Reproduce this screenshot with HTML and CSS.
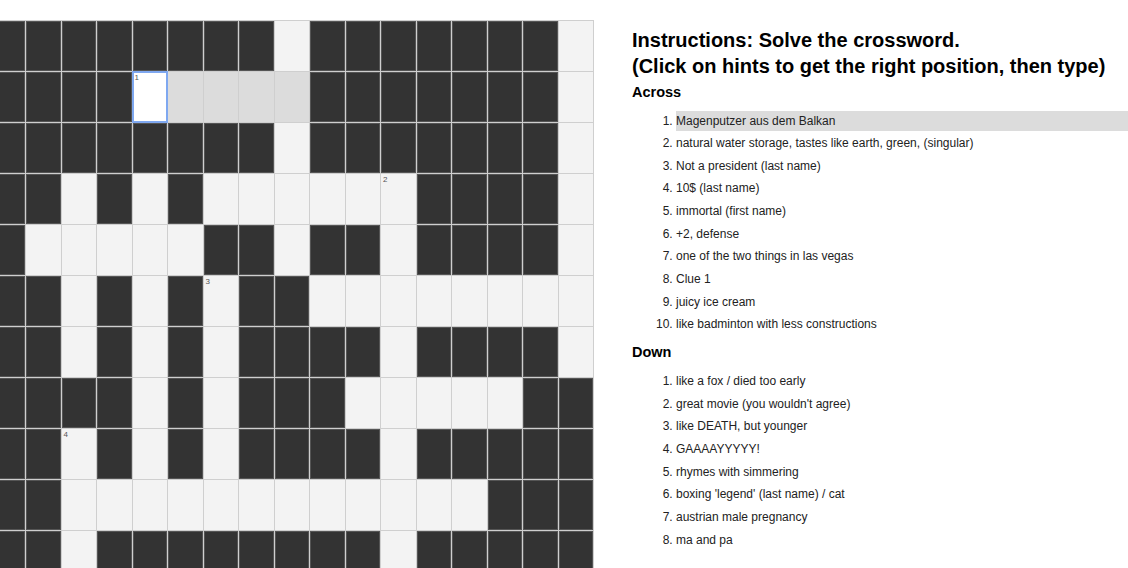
FILE: index.html
```html
<!DOCTYPE html>
<html lang="en">
<head>
<meta charset="utf-8">
<title>Crossword</title>
<link rel="stylesheet" href="styles.css">
</head>
<body>
<div class="page">
  <div class="board">
    <div class="grid">
      <!-- row 0 -->
      <div class="c b"></div><div class="c b"></div><div class="c b"></div><div class="c b"></div><div class="c b"></div><div class="c b"></div><div class="c b"></div><div class="c b"></div><div class="c"></div><div class="c b"></div><div class="c b"></div><div class="c b"></div><div class="c b"></div><div class="c b"></div><div class="c b"></div><div class="c b"></div><div class="c"></div>
      <!-- row 1 -->
      <div class="c b"></div><div class="c b"></div><div class="c b"></div><div class="c b"></div><div class="c sel"><span class="num">1</span></div><div class="c h"></div><div class="c h"></div><div class="c h"></div><div class="c h"></div><div class="c b"></div><div class="c b"></div><div class="c b"></div><div class="c b"></div><div class="c b"></div><div class="c b"></div><div class="c b"></div><div class="c"></div>
      <!-- row 2 -->
      <div class="c b"></div><div class="c b"></div><div class="c b"></div><div class="c b"></div><div class="c b"></div><div class="c b"></div><div class="c b"></div><div class="c b"></div><div class="c"></div><div class="c b"></div><div class="c b"></div><div class="c b"></div><div class="c b"></div><div class="c b"></div><div class="c b"></div><div class="c b"></div><div class="c"></div>
      <!-- row 3 -->
      <div class="c b"></div><div class="c b"></div><div class="c"></div><div class="c b"></div><div class="c"></div><div class="c b"></div><div class="c"></div><div class="c"></div><div class="c"></div><div class="c"></div><div class="c"></div><div class="c"><span class="num">2</span></div><div class="c b"></div><div class="c b"></div><div class="c b"></div><div class="c b"></div><div class="c"></div>
      <!-- row 4 -->
      <div class="c b"></div><div class="c"></div><div class="c"></div><div class="c"></div><div class="c"></div><div class="c"></div><div class="c b"></div><div class="c b"></div><div class="c"></div><div class="c b"></div><div class="c b"></div><div class="c"></div><div class="c b"></div><div class="c b"></div><div class="c b"></div><div class="c b"></div><div class="c"></div>
      <!-- row 5 -->
      <div class="c b"></div><div class="c b"></div><div class="c"></div><div class="c b"></div><div class="c"></div><div class="c b"></div><div class="c"><span class="num">3</span></div><div class="c b"></div><div class="c b"></div><div class="c"></div><div class="c"></div><div class="c"></div><div class="c"></div><div class="c"></div><div class="c"></div><div class="c"></div><div class="c"></div>
      <!-- row 6 -->
      <div class="c b"></div><div class="c b"></div><div class="c"></div><div class="c b"></div><div class="c"></div><div class="c b"></div><div class="c"></div><div class="c b"></div><div class="c b"></div><div class="c b"></div><div class="c b"></div><div class="c"></div><div class="c b"></div><div class="c b"></div><div class="c b"></div><div class="c b"></div><div class="c"></div>
      <!-- row 7 -->
      <div class="c b"></div><div class="c b"></div><div class="c b"></div><div class="c b"></div><div class="c"></div><div class="c b"></div><div class="c"></div><div class="c b"></div><div class="c b"></div><div class="c b"></div><div class="c"></div><div class="c"></div><div class="c"></div><div class="c"></div><div class="c"></div><div class="c b"></div><div class="c b"></div>
      <!-- row 8 -->
      <div class="c b"></div><div class="c b"></div><div class="c"><span class="num">4</span></div><div class="c b"></div><div class="c"></div><div class="c b"></div><div class="c"></div><div class="c b"></div><div class="c b"></div><div class="c b"></div><div class="c b"></div><div class="c"></div><div class="c b"></div><div class="c b"></div><div class="c b"></div><div class="c b"></div><div class="c b"></div>
      <!-- row 9 -->
      <div class="c b"></div><div class="c b"></div><div class="c"></div><div class="c"></div><div class="c"></div><div class="c"></div><div class="c"></div><div class="c"></div><div class="c"></div><div class="c"></div><div class="c"></div><div class="c"></div><div class="c"></div><div class="c"></div><div class="c b"></div><div class="c b"></div><div class="c b"></div>
      <!-- row 10 -->
      <div class="c b"></div><div class="c b"></div><div class="c"></div><div class="c b"></div><div class="c b"></div><div class="c b"></div><div class="c b"></div><div class="c b"></div><div class="c b"></div><div class="c b"></div><div class="c b"></div><div class="c"></div><div class="c b"></div><div class="c b"></div><div class="c b"></div><div class="c b"></div><div class="c b"></div>
    </div>
  </div>
  <div class="panel">
    <h1 class="title">Instructions: Solve the crossword.<br>(Click on hints to get the right position, then type)</h1>
    <h2 class="dir">Across</h2>
    <ol class="clues">
      <li class="active">Magenputzer aus dem Balkan</li>
      <li>natural water storage, tastes like earth, green, (singular)</li>
      <li>Not a president (last name)</li>
      <li>10$ (last name)</li>
      <li>immortal (first name)</li>
      <li>+2, defense</li>
      <li>one of the two things in las vegas</li>
      <li>Clue 1</li>
      <li>juicy ice cream</li>
      <li>like badminton with less constructions</li>
    </ol>
    <h2 class="dir">Down</h2>
    <ol class="clues">
      <li>like a fox / died too early</li>
      <li>great movie (you wouldn't agree)</li>
      <li>like DEATH, but younger</li>
      <li>GAAAAYYYYY!</li>
      <li>rhymes with simmering</li>
      <li>boxing 'legend' (last name) / cat</li>
      <li>austrian male pregnancy</li>
      <li>ma and pa</li>
    </ol>
  </div>
</div>
</body>
</html>
```

FILE: styles.css
```css
html, body {
  margin: 0;
  padding: 0;
  background: #fff;
}

body {
  font-family: "Liberation Sans", Arial, sans-serif;
  color: #222;
}

.page {
  display: flex;
  align-items: flex-start;
}

.board {
  flex: none;
  width: 594px;
  height: 548px;
  margin-top: 20px;
  overflow: hidden;
}

.grid {
  display: grid;
  grid-template-columns: repeat(17, 34.5px);
  grid-auto-rows: 50px;
  gap: 1px;
  padding: 1px;
  margin-left: -10.5px;
  width: max-content;
  background: #cfcfcf;
}

.c {
  position: relative;
  background: #f3f3f3;
}

.c.b {
  background: #333;
  box-shadow: inset 0 0 0 1px #555;
}

.c.h {
  background: #dcdcdc;
}

.c.sel {
  background: #fff;
  outline: 2px solid #7fa8f0;
  outline-offset: -1px;
  z-index: 1;
}

.num {
  position: absolute;
  top: 2px;
  left: 2px;
  font-size: 8px;
  line-height: 8px;
  color: #555;
}

.panel {
  flex: 1;
  min-width: 0;
  margin-left: 38px;
}

.title {
  margin: 27px 0 4.5px;
  font-size: 20px;
  line-height: 26px;
  font-weight: bold;
  color: #000;
}

.dir {
  margin: 0;
  font-size: 14.5px;
  line-height: 17px;
  font-weight: bold;
  color: #000;
}

.clues {
  margin: 10px 0 9.5px;
  padding-left: 44px;
  font-size: 12px;
}

.clues li {
  padding: 3px 0;
  line-height: 14px;
}

.clues li + li {
  margin-top: 2.67px;
}

.clues li.active {
  background: #dcdcdc;
}
```
